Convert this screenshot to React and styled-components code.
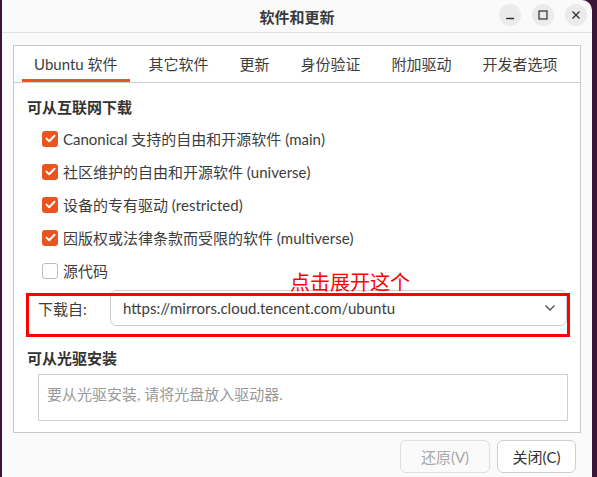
import React, { useState } from "react";
import styled, { createGlobalStyle } from "styled-components";

const GlobalStyle = createGlobalStyle`
  html, body {
    margin: 0;
    padding: 0;
    background: #3d1535;
    overflow: hidden;
  }
  body {
    font-family: Lato, "Noto Sans CJK SC", sans-serif;
    color: #3d3d3d;
  }
`;

const Window = styled.div`
  margin-left: 2px;
  width: 590px;
  height: 477px;
  background: #fafafa;
  border-radius: 0 10px 0 0;
  overflow: hidden;
  display: flex;
  flex-direction: column;
`;

const TitleBar = styled.div`
  height: 32px;
  flex-shrink: 0;
  border-bottom: 1px solid #e2e2e2;
  display: grid;
  grid-template-columns: 1fr auto 1fr;
  align-items: center;
`;

const Title = styled.div`
  grid-column: 2;
  font-size: 15px;
  font-weight: 700;
  color: #3a3a3a;
`;

const Controls = styled.div`
  grid-column: 3;
  justify-self: end;
  display: flex;
  gap: 11px;
  padding-right: 5px;
  margin-top: -2px;
`;

const RoundButton = styled.div`
  width: 22px;
  height: 22px;
  border-radius: 50%;
  background: #ebebeb;
  display: flex;
  align-items: center;
  justify-content: center;
`;

const Body = styled.div`
  flex: 1;
  padding: 12px 11px 0 11px;
  display: flex;
  flex-direction: column;
`;

const Frame = styled.div`
  border: 1px solid #c9c9c9;
  background: #ffffff;
  height: 386px;
  display: flex;
  flex-direction: column;
`;

const TabBar = styled.div`
  height: 36px;
  flex-shrink: 0;
  border-bottom: 1px solid #cfcfcf;
  display: flex;
  gap: 7px;
  padding-left: 8px;
`;

const Tab = styled.div`
  flex-shrink: 0;
  white-space: nowrap;
  padding: 0 12px 2px 12px;
  display: flex;
  align-items: center;
  font-size: 15px;
  color: #3d3d3d;
  box-shadow: ${(p) => (p.$active ? "inset 0 -3px 0 #e95420" : "none")};
  cursor: pointer;
`;

const Content = styled.div`
  padding: 14px 13px 0 13px;
  display: flex;
  flex-direction: column;
`;

const Heading = styled.div`
  font-size: 15px;
  font-weight: 700;
  line-height: 20px;
  color: #333;
`;

const CheckList = styled.div`
  display: flex;
  flex-direction: column;
  padding: 5px 0 0 15px;
`;

const CheckRow = styled.label`
  height: 33px;
  display: flex;
  align-items: center;
  gap: 5px;
  font-size: 15px;
  color: #3d3d3d;
  white-space: nowrap;
  cursor: pointer;
`;

const Box = styled.span`
  width: 16px;
  height: 16px;
  box-sizing: border-box;
  border-radius: 3px;
  background: ${(p) => (p.$checked ? "#e95420" : "#ffffff")};
  border: ${(p) => (p.$checked ? "none" : "1px solid #bdbdbd")};
  display: flex;
  align-items: center;
  justify-content: center;
  flex-shrink: 0;
`;

const SourceRow = styled.div`
  position: relative;
  margin-top: 3px;
  height: 36px;
  display: flex;
  align-items: center;
  padding-left: 11px;
`;

const SourceLabel = styled.div`
  width: 72px;
  font-size: 15px;
  color: #3d3d3d;
`;

const Combo = styled.div`
  flex: 1;
  height: 36px;
  box-sizing: border-box;
  border: 1px solid #cdcdcd;
  border-radius: 6px;
  background: #ffffff;
  display: flex;
  align-items: center;
  justify-content: space-between;
  padding: 0 10px 0 12px;
  font-size: 15px;
  color: #3d3d3d;
`;

const Highlight = styled.div`
  position: absolute;
  left: -1px;
  top: 3px;
  width: 544px;
  height: 44px;
  box-sizing: border-box;
  border: 3px solid #ff0000;
  pointer-events: none;
`;

const Note = styled.div`
  position: absolute;
  left: 263px;
  top: -20px;
  font-size: 20px;
  line-height: 24px;
  color: #ff0000;
  pointer-events: none;
`;

const SecondHeading = styled(Heading)`
  margin-top: 22px;
`;

const DiscArea = styled.div`
  margin: 6px -1px 0 11px;
  height: 47px;
  box-sizing: border-box;
  border: 1px solid #cfcfcf;
  background: #ffffff;
  padding: 8px 8px;
  font-size: 15px;
  color: #9a9a9a;
`;

const Footer = styled.div`
  display: flex;
  justify-content: flex-end;
  gap: 7px;
  padding: 7px 5px 0 0;
`;

const Button = styled.button`
  height: 33px;
  box-sizing: border-box;
  padding: 0;
  width: ${(p) => p.$w}px;
  border-radius: 6px;
  border: 1px solid ${(p) => (p.disabled ? "#dedede" : "#cfcfcf")};
  background: ${(p) => (p.disabled ? "#fafafa" : "#ffffff")};
  color: ${(p) => (p.disabled ? "#a8a8a8" : "#333")};
  font-family: inherit;
  font-size: 15px;
  cursor: ${(p) => (p.disabled ? "default" : "pointer")};
`;

const Check = () => (
  <svg width="11" height="9" viewBox="0 0 11 9">
    <path d="M1.5 4.6 L4.2 7.2 L9.5 1.8" fill="none" stroke="#fff" strokeWidth="2" strokeLinecap="round" strokeLinejoin="round" />
  </svg>
);

const sources = [
  { label: "Canonical 支持的自由和开源软件 (main)", on: true },
  { label: "社区维护的自由和开源软件 (universe)", on: true },
  { label: "设备的专有驱动 (restricted)", on: true },
  { label: "因版权或法律条款而受限的软件 (multiverse)", on: true },
  { label: "源代码", on: false },
];

const tabs = ["Ubuntu 软件", "其它软件", "更新", "身份验证", "附加驱动", "开发者选项"];

export default function App() {
  const [active, setActive] = useState(0);
  const [checks, setChecks] = useState(sources.map((s) => s.on));

  return (
    <>
      <GlobalStyle />
      <Window>
        <TitleBar>
          <Title>软件和更新</Title>
          <Controls>
            <RoundButton>
              <svg width="10" height="10" viewBox="0 0 10 10">
                <path d="M1 8.5 H9" stroke="#2e2e2e" strokeWidth="1.3" />
              </svg>
            </RoundButton>
            <RoundButton>
              <svg width="10" height="10" viewBox="0 0 10 10">
                <rect x="1" y="1" width="8" height="8" fill="none" stroke="#2e2e2e" strokeWidth="1.2" />
              </svg>
            </RoundButton>
            <RoundButton>
              <svg width="10" height="10" viewBox="0 0 10 10">
                <path d="M1.5 1.5 L8.5 8.5 M8.5 1.5 L1.5 8.5" stroke="#2e2e2e" strokeWidth="1.3" />
              </svg>
            </RoundButton>
          </Controls>
        </TitleBar>

        <Body>
          <Frame>
            <TabBar>
              {tabs.map((t, i) => (
                <Tab key={t} $active={i === active} onClick={() => setActive(i)}>
                  {t}
                </Tab>
              ))}
            </TabBar>

            <Content>
              <Heading>可从互联网下载</Heading>
              <CheckList>
                {sources.map((s, i) => (
                  <CheckRow
                    key={s.label}
                    onClick={() => setChecks(checks.map((c, j) => (j === i ? !c : c)))}
                  >
                    <Box $checked={checks[i]}>{checks[i] && <Check />}</Box>
                    {s.label}
                  </CheckRow>
                ))}
              </CheckList>

              <SourceRow>
                <SourceLabel>下载自:</SourceLabel>
                <Combo>
                  https://mirrors.cloud.tencent.com/ubuntu
                  <svg width="12" height="8" viewBox="0 0 12 8">
                    <path d="M1.5 1.5 L6 6 L10.5 1.5" fill="none" stroke="#555" strokeWidth="1.4" />
                  </svg>
                </Combo>
                <Highlight />
                <Note>点击展开这个</Note>
              </SourceRow>

              <SecondHeading>可从光驱安装</SecondHeading>
              <DiscArea>要从光驱安装, 请将光盘放入驱动器.</DiscArea>
            </Content>
          </Frame>

          <Footer>
            <Button $w={90} disabled>还原(V)</Button>
            <Button $w={79}>关闭(C)</Button>
          </Footer>
        </Body>
      </Window>
    </>
  );
}
